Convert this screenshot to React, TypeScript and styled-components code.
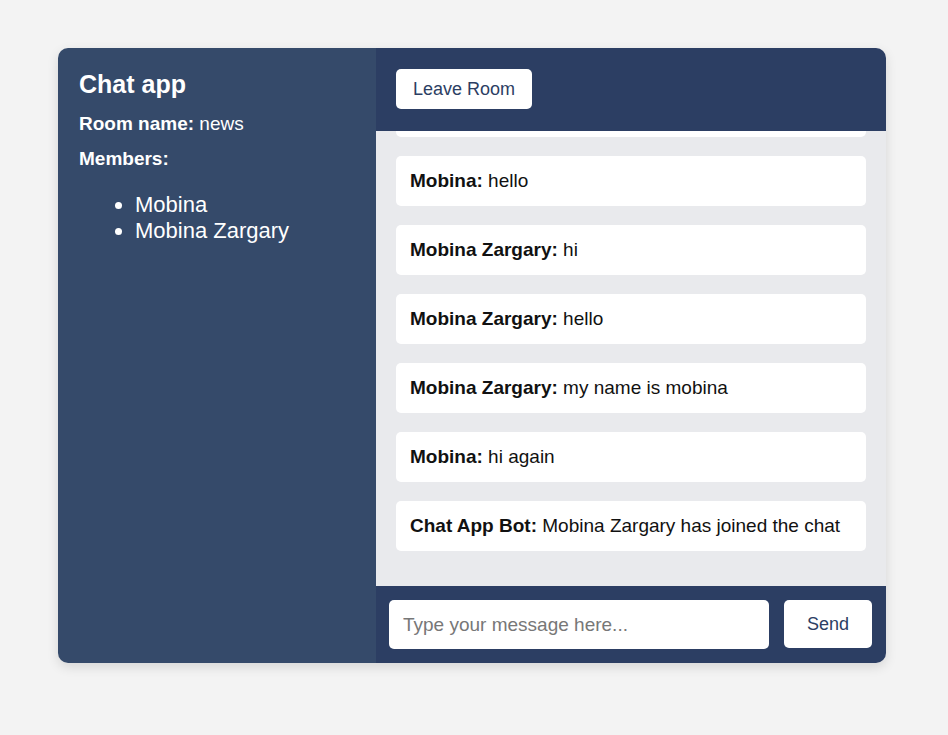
import React from "react";
import styled, { createGlobalStyle } from "styled-components";

type Message = {
  author: string;
  text: string;
};

const messages: Message[] = [
  { author: "Mobina", text: "hi" },
  { author: "Mobina", text: "hello" },
  { author: "Mobina Zargary", text: "hi" },
  { author: "Mobina Zargary", text: "hello" },
  { author: "Mobina Zargary", text: "my name is mobina" },
  { author: "Mobina", text: "hi again" },
  { author: "Chat App Bot", text: "Mobina Zargary has joined the chat" },
];

const members = ["Mobina", "Mobina Zargary"];

export default function App() {
  return (
    <>
      <GlobalStyle />
      <Page>
        <Card>
          <Sidebar>
            <Title>Chat app</Title>
            <Info>
              <b>Room name:</b> news
            </Info>
            <Info>
              <b>Members:</b>
            </Info>
            <MemberList>
              {members.map((name) => (
                <li key={name}>{name}</li>
              ))}
            </MemberList>
          </Sidebar>
          <Main>
            <Header>
              <LightButton>Leave Room</LightButton>
            </Header>
            <Messages>
              {messages.map((m, index) => (
                <Bubble key={index}>
                  <span>
                    <b>{m.author}:</b> {m.text}
                  </span>
                </Bubble>
              ))}
            </Messages>
            <Footer>
              <Input placeholder="Type your message here..." />
              <LightButton $wide>Send</LightButton>
            </Footer>
          </Main>
        </Card>
      </Page>
    </>
  );
}

//Styles
const GlobalStyle = createGlobalStyle`
  body {
    margin: 0;
    background: #f3f3f3;
    font-family: "Liberation Sans", Arial, sans-serif;
  }
`;
const Page = styled.div`
  min-height: 735px;
  box-sizing: border-box;
  padding: 48px 0 0 58px;
`;
const Card = styled.div`
  width: 828px;
  height: 615px;
  display: flex;
  border-radius: 10px;
  overflow: hidden;
  box-shadow: 0 4px 12px rgba(0, 0, 0, 0.12);
`;
const Sidebar = styled.div`
  width: 318px;
  background: #354a6a;
  color: #fff;
  box-sizing: border-box;
  padding: 20px 21px;
`;
const Title = styled.h1`
  margin: 0 0 13px;
  font-size: 25px;
  line-height: 32px;
`;
const Info = styled.p`
  margin: 0 0 14px;
  font-size: 19px;
  line-height: 21px;
`;
const MemberList = styled.ul`
  margin: 23px 0 0;
  padding-left: 56px;
  font-size: 22px;
  line-height: 26px;
`;
const Main = styled.div`
  flex: 1;
  display: flex;
  flex-direction: column;
  background: #e9eaed;
`;
const Header = styled.div`
  height: 83px;
  background: #2c3e63;
  box-sizing: border-box;
  padding: 21px 20px;
  display: flex;
  align-items: flex-start;
`;
const LightButton = styled.button<{ $wide?: boolean }>`
  height: ${(p) => (p.$wide ? "48px" : "40px")};
  padding: 0 ${(p) => (p.$wide ? "23px" : "17px")};
  border: none;
  border-radius: 5px;
  background: #fff;
  color: #2c3e63;
  font-family: "Liberation Sans", Arial, sans-serif;
  font-size: 18px;
  flex-shrink: 0;
`;
const Messages = styled.div`
  flex: 1;
  overflow: hidden;
  display: flex;
  flex-direction: column;
  justify-content: flex-end;
  gap: 19px;
  padding: 0 20px 35px;
`;
const Bubble = styled.div`
  flex-shrink: 0;
  height: 50px;
  display: flex;
  align-items: center;
  white-space: nowrap;
  box-sizing: border-box;
  padding: 0 14px;
  background: #fff;
  border-radius: 5px;
  color: #111;
  font-size: 19px;
`;
const Footer = styled.div`
  height: 77px;
  background: #2c3e63;
  box-sizing: border-box;
  padding: 14px 14px 0 13px;
  display: flex;
  align-items: flex-start;
  gap: 15px;
`;
const Input = styled.input`
  flex: 1;
  min-width: 0;
  height: 49px;
  box-sizing: border-box;
  border: none;
  border-radius: 5px;
  padding: 0 14px;
  font-family: "Liberation Sans", Arial, sans-serif;
  font-size: 19px;
  outline: none;

  &::placeholder {
    color: #777;
  }
`;
